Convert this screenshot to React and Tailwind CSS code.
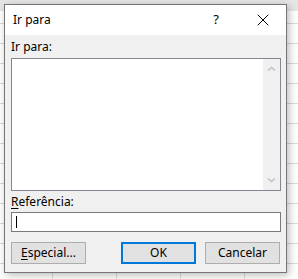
import { X } from 'lucide-react'

const Chevron = ({ down }) => (
  <svg width="9" height="6" viewBox="0 0 9 6" className="block">
    <path
      d={down ? 'M1 1.5 L4.5 4.5 L8 1.5' : 'M1 4.5 L4.5 1.5 L8 4.5'}
      fill="none"
      stroke="#c2c2c2"
      strokeWidth="1.6"
    />
  </svg>
)

const Button = ({ children, primary }) => (
  <button
    className={`w-[75px] h-[22px] bg-[#e1e1e1] text-[12px] leading-none text-black flex items-center justify-center ${
      primary ? 'border-2 border-[#0078d7]' : 'border border-[#adadad]'
    }`}
  >
    {children}
  </button>
)

export default function App() {
  return (
    <div className="w-[298px] h-[279px] overflow-hidden bg-white bg-[linear-gradient(to_bottom,#e6e6e6_0_11px,transparent_11px),repeating-linear-gradient(to_bottom,transparent_0_3px,#dadada_3px_4px,transparent_4px_20px),repeating-linear-gradient(to_right,transparent_0_52px,#dadada_52px_53px,transparent_53px_64px)] pt-[4px] pl-[4px] font-['Segoe_UI','Noto_Sans',sans-serif]">
      <div className="w-[283px] h-[269px] border border-[#767676] bg-[#f0f0f0] shadow-[2px_2px_8px_rgba(0,0,0,0.28)] flex flex-col text-[12px] text-black">
        {/* Title bar */}
        <div className="h-[30px] bg-white flex items-center pl-[8px] shrink-0">
          <span className="flex-1">Ir para</span>
          <span className="w-[30px] text-center text-[13px] mr-[22px]">?</span>
          <X size={20} strokeWidth={1} absoluteStrokeWidth className="mr-[13px] text-black" />
        </div>

        {/* Body */}
        <div className="flex flex-col px-[6px] pt-[4px]">
          <div className="h-[16px] leading-[16px]">Ir para:</div>

          <div className="mt-[3px] w-[270px] h-[133px] border border-[#828790] bg-white flex">
            <div className="flex-1" />
            <div className="w-[17px] bg-[#f0f0f0] flex flex-col items-center justify-between py-[7px]">
              <Chevron />
              <Chevron down />
            </div>
          </div>

          <div className="mt-[3px] h-[16px] leading-[16px]">
            <span className="underline underline-offset-2">R</span>eferência:
          </div>

          <div className="mt-[2px] w-[270px] h-[20px] border border-[#7a7a7a] bg-white flex items-center pl-[4px]">
            <div className="w-px h-[12px] bg-black" />
          </div>

          <div className="mt-[10px] flex w-[270px]">
            <Button>
              <span>
                <span className="underline underline-offset-2">E</span>special...
              </span>
            </Button>
            <div className="ml-[35px]">
              <Button primary>OK</Button>
            </div>
            <div className="ml-[9px]">
              <Button>Cancelar</Button>
            </div>
          </div>
        </div>
      </div>
    </div>
  )
}
